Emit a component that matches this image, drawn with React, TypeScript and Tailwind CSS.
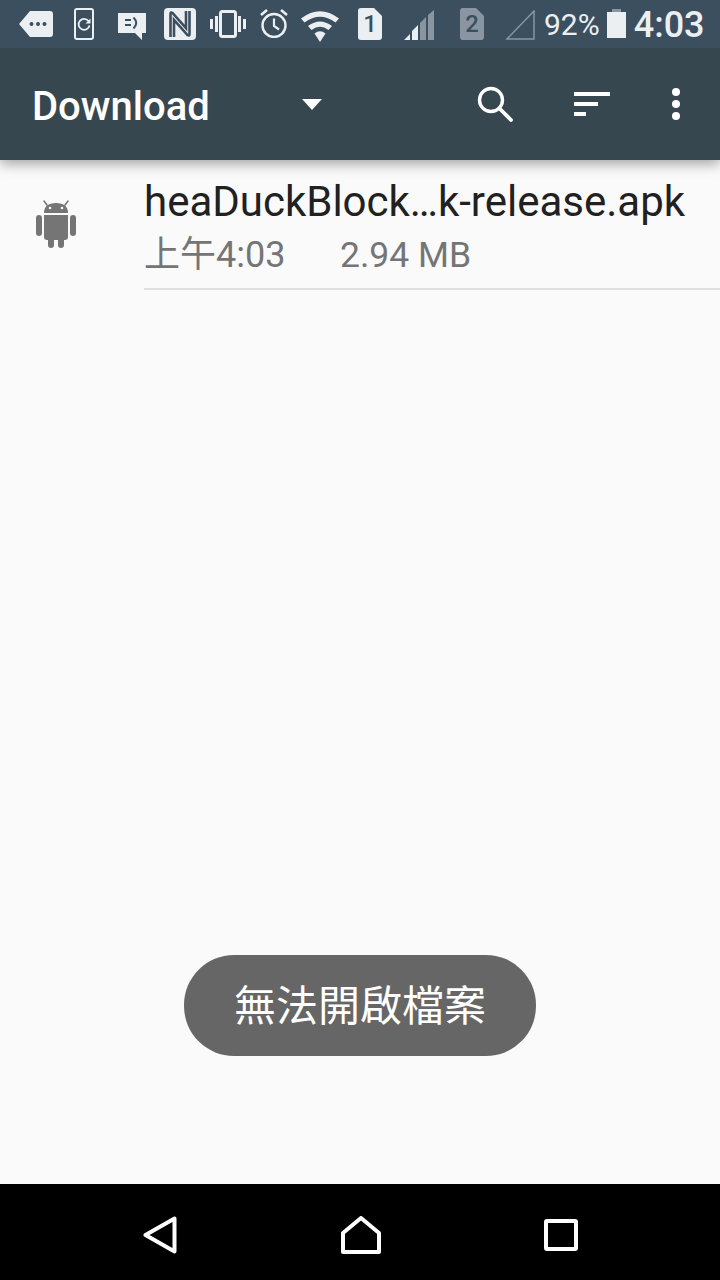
import type { ReactNode } from 'react'

const sans = 'font-["Roboto","Noto_Sans_CJK_TC",sans-serif]'

function Icon({ w, h, className, children }: { w: number; h: number; className: string; children: ReactNode }) {
  return (
    <svg width={w} height={h} viewBox={`0 0 ${w} ${h}`} className={`block shrink-0 ${className}`}>
      {children}
    </svg>
  )
}

function StatusBar() {
  const ink = '#eceff1'
  return (
    <div className={`relative z-20 flex h-12 items-start bg-[#3c4f5f] pl-[19px] ${sans}`}>
      {/* mensaje */}
      <Icon w={34} h={26} className="mt-[11px]">
        <path d="M11 0H31a3 3 0 0 1 3 3V23a3 3 0 0 1-3 3H11L0 13Z" fill={ink} />
        <circle cx="12.500" cy="13" r="2" fill="#3c4f5f" />
        <circle cx="19" cy="13" r="2" fill="#3c4f5f" />
        <circle cx="25.500" cy="13" r="2" fill="#3c4f5f" />
      </Icon>
      {/* teléfono con flecha */}
      <Icon w={20} h={32} className="ml-[21px] mt-2">
        <rect x="1" y="1" width="18" height="30" rx="2" fill="none" stroke={ink} strokeWidth="2" />
        <path d="M14.500 13A5.500 5.500 0 1 0 15.500 17.500" fill="none" stroke={ink} strokeWidth="1.800" />
        <path d="M11.500 15.500H16.500V10.500Z" fill={ink} />
      </Icon>
      {/* burbuja */}
      <Icon w={28} h={27} className="ml-6 mt-[13px]">
        <path d="M0 0H28V20H24V27L17 20H0Z" fill={ink} />
        <path d="M7 7H13M7 12H13" stroke="#3c4f5f" strokeWidth="2" />
        <path d="M15.500 4.500Q21 10 15.500 15.500" fill="none" stroke="#3c4f5f" strokeWidth="2" />
      </Icon>
      {/* NFC */}
      <Icon w={32} h={32} className="ml-[18px] mt-2">
        <rect width="32" height="32" rx="4" fill={ink} />
        <path d="M6.500 29V6Q6.500 3.500 8.500 5L22 20V3" fill="none" stroke="#3c4f5f" strokeWidth="2.600" />
        <path d="M25.500 3V26Q25.500 28.500 23.500 27L10 12V29" fill="none" stroke="#3c4f5f" strokeWidth="2.600" />
      </Icon>
      {/* vibración */}
      <Icon w={36} h={28} className="ml-3.5 mt-2.5">
        <rect x="10.500" y="1.500" width="15" height="25" rx="2" fill="none" stroke={ink} strokeWidth="3" />
        <path d="M1.500 9V19M6.500 6V22M29.500 6V22M34.500 9V19" stroke={ink} strokeWidth="3" />
      </Icon>
      {/* alarma */}
      <Icon w={28} h={29} className="ml-3.5 mt-[9px]">
        <circle cx="14" cy="16.500" r="11.500" fill="none" stroke={ink} strokeWidth="2.400" />
        <path d="M14 9.500V17L19 20.500" fill="none" stroke={ink} strokeWidth="2.200" />
        <path d="M1 6L7 1M27 6L21 1" stroke={ink} strokeWidth="2.600" />
      </Icon>
      {/* wifi */}
      <Icon w={38} h={32} className="ml-[13px] mt-2.5">
        <path d="M0 8.500Q19 -6 38 8.500L34.500 12.500Q19 1 3.500 12.500Z" fill={ink} />
        <path d="M7 16Q19 7 31 16L27.500 20Q19 13.500 10.500 20Z" fill={ink} />
        <path d="M13.500 23.500Q19 19 24.500 23.500L19 32Z" fill={ink} />
      </Icon>
      {/* SIM 1 */}
      <div className="relative ml-[19px] mt-2 h-8 w-6">
        <Icon w={24} h={32} className="">
          <path d="M3 0H16L24 8V29a3 3 0 0 1-3 3H3a3 3 0 0 1-3-3V3a3 3 0 0 1 3-3Z" fill={ink} />
        </Icon>
        <span className="absolute inset-0 text-center text-[24px] leading-8 font-medium text-[#3c4f5f]">1</span>
      </div>
      {/* señal */}
      <Icon w={30} h={30} className="ml-[22px] mt-2.5">
        <path d="M0 30L6 24V30ZM8 30V21L14 15V30Z" fill={ink} />
        <path d="M16 30V13L22 7V30ZM24 30V5L30 0V30Z" fill="#8996a1" />
      </Icon>
      {/* SIM 2 */}
      <div className="relative ml-[26px] mt-2 h-8 w-6">
        <Icon w={24} h={32} className="">
          <path d="M3 0H16L24 8V29a3 3 0 0 1-3 3H3a3 3 0 0 1-3-3V3a3 3 0 0 1 3-3Z" fill="#8996a1" />
        </Icon>
        <span className="absolute inset-0 text-center text-[24px] leading-8 font-medium text-[#3c4f5f]">2</span>
      </div>
      <Icon w={30} h={30} className="ml-[21px] mt-2.5">
        <path d="M29 1V29H2Z" fill="none" stroke="#8996a1" strokeWidth="1.500" />
      </Icon>
      <span className="ml-[9px] mt-[5px] text-[30px] leading-10 text-[#eceff1]">92%</span>
      <Icon w={19} h={29} className="ml-[7px] mt-[9px]">
        <path d="M5 0H14V3H19V29H0V3H5Z" fill={ink} />
        <path d="M5 0H14V3H5Z" fill="#8996a1" />
      </Icon>
      <span className="ml-[8px] mt-[5px] text-[36px] leading-10 font-medium text-[#eceff1]">4:03</span>
    </div>
  )
}

function Toolbar() {
  return (
    <div className={`relative z-10 flex h-28 items-center bg-[#37474f] pl-8 shadow-[0_4px_12px_rgba(0,0,0,0.35)] ${sans}`}>
      <span className="w-[270px] pt-[5px] text-[40px] font-medium text-white">Download</span>
      <Icon w={20} h={11} className="">
        <path d="M0 0H20L10 11Z" fill="#fff" />
      </Icon>
      <Icon w={36} h={36} className="ml-[155px]">
        <circle cx="14" cy="14" r="11.500" fill="none" stroke="#fff" strokeWidth="3.400" />
        <path d="M22.500 22.500L34 34" stroke="#fff" strokeWidth="3.800" strokeLinecap="round" />
      </Icon>
      <Icon w={36} h={24} className="ml-[61px]">
        <path d="M0 0H36V4H0ZM0 10H24V14H0ZM0 20H12V24H0Z" fill="#fff" />
      </Icon>
      <Icon w={8} h={32} className="ml-[62px]">
        <circle cx="4" cy="4" r="4" fill="#fff" />
        <circle cx="4" cy="16" r="4" fill="#fff" />
        <circle cx="4" cy="28" r="4" fill="#fff" />
      </Icon>
    </div>
  )
}

function FileRow() {
  return (
    <div className={`flex ${sans}`}>
      <div className="flex w-36 shrink-0 justify-center pt-10 pr-[32px]">
        <Icon w={40} h={48} className="">
          <path d="M8 1L11 5M32 1L29 5" stroke="#757575" strokeWidth="1.500" strokeLinecap="round" />
          <path d="M8 13Q8 3 20 3T32 13Z" fill="#757575" />
          <circle cx="14" cy="8" r="1.300" fill="#fafafa" />
          <circle cx="26" cy="8" r="1.300" fill="#fafafa" />
          <path d="M8 15H32V37a3 3 0 0 1-3 3H11a3 3 0 0 1-3-3Z" fill="#757575" />
          <rect x="0" y="15" width="6" height="21" rx="3" fill="#757575" />
          <rect x="34" y="15" width="6" height="21" rx="3" fill="#757575" />
          <rect x="12" y="36" width="6" height="12" rx="3" fill="#757575" />
          <rect x="22" y="36" width="6" height="12" rx="3" fill="#757575" />
        </Icon>
      </div>
      <div className="h-[130px] flex-1 border-b-2 border-[#e0e0e0]">
        <div className="pt-[19px] text-[42px] leading-[46px] whitespace-nowrap text-[#212121]">heaDuckBlock…k-release.apk</div>
        <div className="flex pt-[10px] text-[36px] leading-[40px] text-[#757575]">
          <span className="w-[196px]">上午4:03</span>
          <span className="text-[35.5px]">2.94 MB</span>
        </div>
      </div>
    </div>
  )
}

export default function App() {
  return (
    <div className="flex h-[1280px] w-[720px] flex-col overflow-hidden bg-[#fafafa]">
      <StatusBar />
      <Toolbar />
      <div className="relative flex-1 bg-[#fafafa]">
        <FileRow />
        <div className={`absolute left-[184px] top-[795px] flex h-[101px] w-[352px] items-center justify-center rounded-[50px] bg-[#666666] pt-0.5 text-[42px] text-white ${sans}`}>
          無法開啟檔案
        </div>
      </div>
      <div className="flex h-24 items-center bg-black pt-1.5">
        <Icon w={34} h={38} className="ml-[143px]">
          <path d="M31.500 2.500V35.500L2.500 19Z" fill="none" stroke="#fff" strokeWidth="4" strokeLinejoin="round" />
        </Icon>
        <Icon w={40} h={38} className="ml-[164px]">
          <path d="M20 2L38 17V36H2V17Z" fill="none" stroke="#fff" strokeWidth="4" strokeLinejoin="round" />
        </Icon>
        <Icon w={34} h={32} className="ml-[163px]">
          <rect x="2" y="2" width="30" height="28" rx="1" fill="none" stroke="#fff" strokeWidth="4" />
        </Icon>
      </div>
    </div>
  )
}
